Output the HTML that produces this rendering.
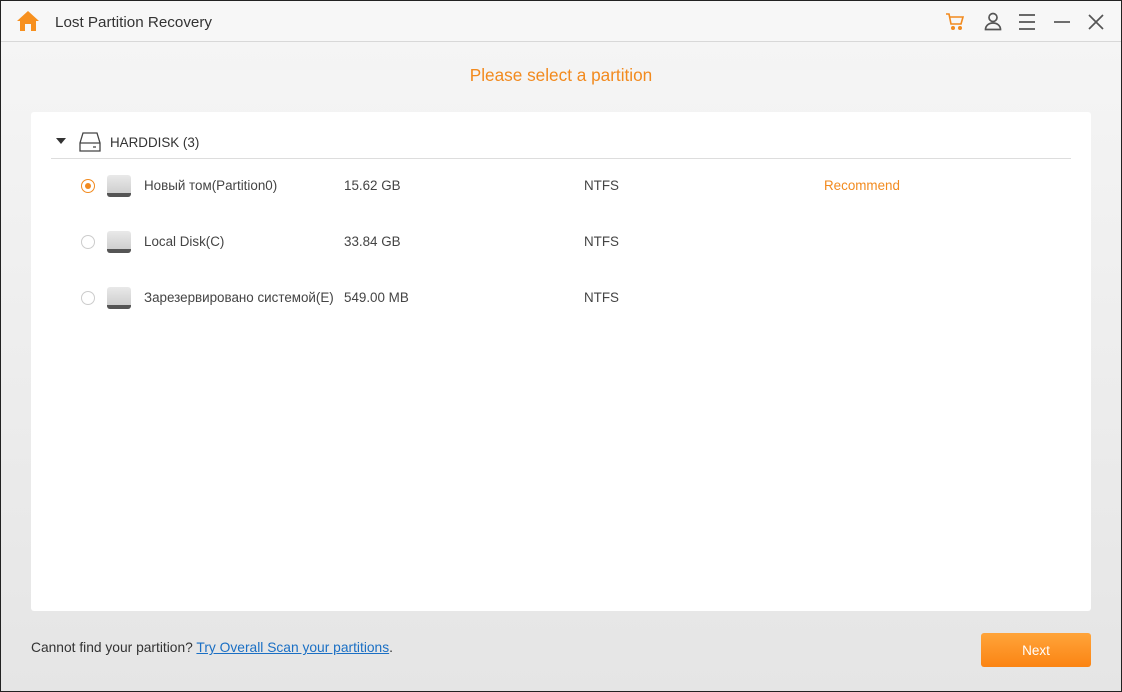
<!DOCTYPE html>
<html><head><meta charset="utf-8"><style>
*{margin:0;padding:0;box-sizing:border-box}
body{width:1122px;height:692px;overflow:hidden;font-family:"Segoe UI","Liberation Sans","DejaVu Sans",sans-serif;position:relative;background:#222}
.win{position:absolute;left:1px;top:1px;width:1120px;height:690px;background:linear-gradient(#f6f6f6,#e5e5e5);}
.tb{position:absolute;left:0;top:0;width:1120px;height:41px;background:#f7f7f7;border-bottom:1px solid #d8d8d8}
.title{position:absolute;left:54px;top:13px;font-size:15.2px;color:#333}
.h{position:absolute;font-size:17.2px;color:#f28a1e;left:0;width:1120px;text-align:center;top:64px}
.panel{position:absolute;left:30px;top:111px;width:1060px;height:499px;background:#fff;border-radius:3px}
.t{position:absolute;font-size:13.4px;color:#444}
.hr{position:absolute;left:20px;top:46px;width:1020px;height:1px;background:#ddd}
.radio{position:absolute;width:14px;height:14px;border-radius:50%;border:1px solid #ccc;left:50px}
.disk{position:absolute;left:76px;width:24px;height:22px;border-radius:3px;background:linear-gradient(#e9e9e9,#c9c9c9);}
.disk:after{content:"";position:absolute;left:0;bottom:0;width:24px;height:4px;background:#555;border-radius:0 0 3px 3px}
.foot{position:absolute;left:30px;top:639px;font-size:13.8px;color:#333}
.foot a{color:#1a6fc4;text-decoration:underline}
.next{position:absolute;left:980px;top:632px;width:110px;height:34px;border-radius:3px;background:linear-gradient(#ffa43a,#fb8413);color:#fff;font-size:13.5px;text-align:center;line-height:36px}
</style></head><body><div class="win">
<div class="tb">
<svg style="position:absolute;left:15px;top:9px" width="24" height="22" viewBox="0 0 24 22"><path d="M12 1 L23 11 L20 11 L20 21 L15 21 L15 14 L9 14 L9 21 L4 21 L4 11 L1 11 Z" fill="#f7901e"/></svg>
<div class="title">Lost Partition Recovery</div>
<svg style="position:absolute;left:944px;top:11px" width="20" height="20" viewBox="0 0 20 20" fill="none" stroke="#f28a1e" stroke-width="1.6"><path d="M1 2h3l2 10h10l2-7H5"/><circle cx="8" cy="16" r="1.2" fill="#f28a1e"/><circle cx="15" cy="16" r="1.2" fill="#f28a1e"/></svg>
<svg style="position:absolute;left:982px;top:10px" width="20" height="20" viewBox="0 0 20 20" fill="none" stroke="#555" stroke-width="1.7"><circle cx="10" cy="6.5" r="4"/><path d="M2.5 18.5c0-4 3.5-6.5 7.5-6.5s7.5 2.5 7.5 6.5z"/></svg>
<svg style="position:absolute;left:1016px;top:11px" width="20" height="20" viewBox="0 0 20 20" stroke="#555" stroke-width="1.7"><path d="M2 3h16M2 10h16M2 17h16"/></svg>
<svg style="position:absolute;left:1051px;top:11px" width="20" height="20" viewBox="0 0 20 20" stroke="#555" stroke-width="1.7"><path d="M2 10h16"/></svg>
<svg style="position:absolute;left:1085px;top:11px" width="20" height="20" viewBox="0 0 20 20" stroke="#555" stroke-width="1.7"><path d="M3 3l14 14M17 3L3 17"/></svg>
</div>
<div class="h">Please select a partition</div>
<div class="panel">
<svg style="position:absolute;left:25px;top:26px" width="10" height="6"><path d="M0 0h10L5 6z" fill="#333"/></svg>
<svg style="position:absolute;left:48px;top:20px" width="22" height="20" viewBox="0 0 22 20" fill="none" stroke="#444" stroke-width="1.3"><path d="M4 1h14l3 10v8H1v-8z M1 11h20"/><path d="M14 15h3"/></svg>
<div class="t" style="left:79px;top:23px;color:#333">HARDDISK (3)</div>
<div class="hr"></div>
<div class="radio" style="top:67px;border-color:#f28a1e"><div style="position:absolute;left:3px;top:3px;width:6px;height:6px;border-radius:50%;background:#f28a1e"></div></div>
<div class="disk" style="top:63px"></div>
<div class="t" style="left:113px;top:66px">Новый том(Partition0)</div>
<div class="t" style="left:313px;top:66px">15.62 GB</div>
<div class="t" style="left:553px;top:66px">NTFS</div>
<div class="t" style="left:793px;top:66px;color:#f28a1e">Recommend</div>
<div class="radio" style="top:123px"></div>
<div class="disk" style="top:119px"></div>
<div class="t" style="left:113px;top:122px">Local Disk(C)</div>
<div class="t" style="left:313px;top:122px">33.84 GB</div>
<div class="t" style="left:553px;top:122px">NTFS</div>
<div class="radio" style="top:179px"></div>
<div class="disk" style="top:175px"></div>
<div class="t" style="left:113px;top:178px">Зарезервировано системой(E)</div>
<div class="t" style="left:313px;top:178px">549.00 MB</div>
<div class="t" style="left:553px;top:178px">NTFS</div>
</div>
<div class="foot">Cannot find your partition? <a>Try Overall Scan your partitions</a>.</div>
<div class="next">Next</div>
</div></body></html>
